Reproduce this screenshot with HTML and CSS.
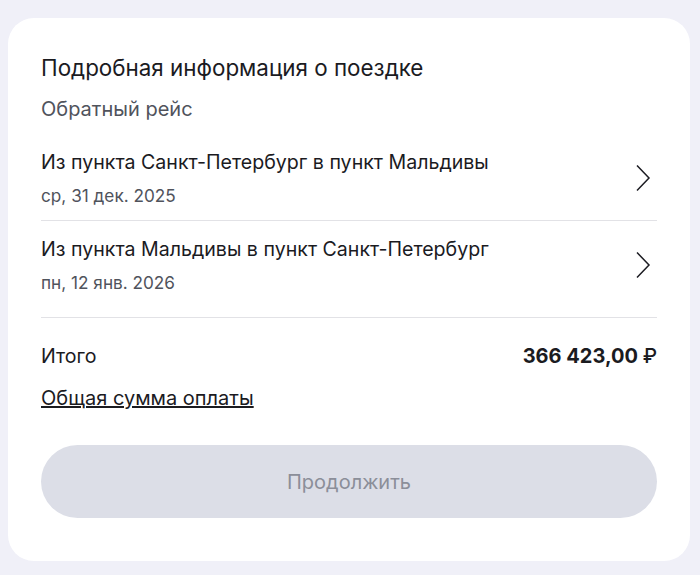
FILE: index.html
```html
<!DOCTYPE html>
<html lang="ru">
<head>
    <meta charset="UTF-8">
    <title>Подробная информация о поездке</title>
    <link rel="stylesheet" href="styles.css">
</head>
<body>
<div class="card">
    <h1 class="title">Подробная информация о поездке</h1>
    <div class="subtitle">Обратный рейс</div>

    <ul class="legs">
        <li class="leg">
            <div class="leg-text">
                <div class="leg-route">Из пункта Санкт-Петербург в пункт Мальдивы</div>
                <div class="leg-date">ср, 31 дек. 2025</div>
            </div>
            <svg class="chevron" width="16" height="28" viewBox="0 0 16 28">
                <path d="M2 1.5 L14 14 L2 26.5" fill="none" stroke="#1c1c22" stroke-width="1.5"/>
            </svg>
        </li>
        <li class="leg">
            <div class="leg-text">
                <div class="leg-route">Из пункта Мальдивы в пункт Санкт-Петербург</div>
                <div class="leg-date">пн, 12 янв. 2026</div>
            </div>
            <svg class="chevron" width="16" height="28" viewBox="0 0 16 28">
                <path d="M2 1.5 L14 14 L2 26.5" fill="none" stroke="#1c1c22" stroke-width="1.5"/>
            </svg>
        </li>
    </ul>

    <div class="total">
        <span class="total-label">Итого</span>
        <span class="total-sum">366 423,00 <span class="currency">₽</span></span>
    </div>
    <a class="total-link" href="#">Общая сумма оплаты</a>

    <button class="btn" disabled>Продолжить</button>
</div>
</body>
</html>
```

FILE: styles.css
```css
*{
    margin: 0;
    padding: 0;
    box-sizing: border-box;
}
ul{
    list-style: none;
}
body{
    background-color: #f0f0f8;
    font-family: Inter, "Liberation Sans", Arial, sans-serif;
    color: #1b1b1f;
}
.card{
    margin: 18px 10px 0 8px;
    background: #fff;
    border-radius: 26px;
    padding: 36px 33px 43px 33px;
}
.title{
    font-size: 22.4px;
    font-weight: normal;
    line-height: 28px;
}
.subtitle{
    margin-top: 14px;
    font-size: 20px;
    line-height: 26px;
    color: #50535c;
}
.legs{
    margin-top: 27px;
}
.leg{
    display: flex;
    align-items: center;
    justify-content: space-between;
    border-bottom: 1px solid #e2e2e6;
    padding: 0 0 13px;
}
.leg + .leg{
    padding: 15px 0 23px;
}
.leg-route{
    font-size: 19.6px;
    line-height: 26px;
}
.leg-date{
    margin-top: 10px;
    font-size: 17.2px;
    line-height: 22px;
    color: #50535c;
}
.chevron{
    margin-right: 6px;
}
.total{
    display: flex;
    justify-content: space-between;
    align-items: center;
    margin-top: 25px;
    font-size: 19.6px;
    line-height: 26px;
}
.total-sum{
    font-weight: bold;
    font-size: 20px;
}
.currency{
    font-weight: 500;
}
.total-link{
    display: inline-block;
    margin-top: 16px;
    font-size: 20px;
    line-height: 26px;
    color: #1b1b1f;
    text-decoration: underline;
}
.btn{
    display: block;
    width: 100%;
    height: 73px;
    margin-top: 34px;
    border: none;
    border-radius: 37px;
    background: #dcdee7;
    color: #8b8e99;
    font-family: inherit;
    font-size: 20px;
}
```
